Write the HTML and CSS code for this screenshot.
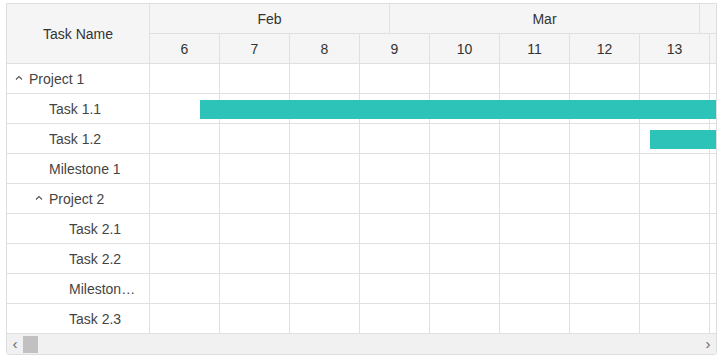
FILE: index.html
```html
<!DOCTYPE html>
<html>
<head>
<meta charset="utf-8">
<link rel="stylesheet" href="styles.css">
</head>
<body>
<div class="gantt">
  <div class="main">
    <div class="grid">
      <div class="grid-head">Task Name</div>
      <div class="row"><span class="tog lvl0"><svg width="8" height="6" viewBox="0 0 8 6"><polyline points="1,4.5 4,1.5 7,4.5" fill="none" stroke="#555" stroke-width="1.1"/></svg></span><span class="name">Project 1</span></div>
      <div class="row"><span class="tog lvl1"></span><span class="name">Task 1.1</span></div>
      <div class="row"><span class="tog lvl1"></span><span class="name">Task 1.2</span></div>
      <div class="row"><span class="tog lvl1"></span><span class="name">Milestone 1</span></div>
      <div class="row"><span class="tog lvl1"><svg width="8" height="6" viewBox="0 0 8 6"><polyline points="1,4.5 4,1.5 7,4.5" fill="none" stroke="#555" stroke-width="1.1"/></svg></span><span class="name">Project 2</span></div>
      <div class="row"><span class="tog lvl2"></span><span class="name">Task 2.1</span></div>
      <div class="row"><span class="tog lvl2"></span><span class="name">Task 2.2</span></div>
      <div class="row"><span class="tog lvl2"></span><span class="name">Milestone 2</span></div>
      <div class="row"><span class="tog lvl2"></span><span class="name">Task 2.3</span></div>
    </div>
    <div class="chart">
      <div class="months">
        <div class="month feb">Feb</div>
        <div class="month mar">Mar</div>
        <div class="month apr"></div>
      </div>
      <div class="days">
        <div class="day">6</div><div class="day">7</div><div class="day">8</div><div class="day">9</div><div class="day">10</div><div class="day">11</div><div class="day">12</div><div class="day">13</div><div class="day"></div>
      </div>
      <div class="rows">
        <div class="crow"><i></i><i></i><i></i><i></i><i></i><i></i><i></i><i></i><i></i></div>
        <div class="crow"><i></i><i></i><i></i><i></i><i></i><i></i><i></i><i></i><i></i><div class="bar bar1"></div></div>
        <div class="crow"><i></i><i></i><i></i><i></i><i></i><i></i><i></i><i></i><i></i><div class="bar bar2"></div></div>
        <div class="crow"><i></i><i></i><i></i><i></i><i></i><i></i><i></i><i></i><i></i></div>
        <div class="crow"><i></i><i></i><i></i><i></i><i></i><i></i><i></i><i></i><i></i></div>
        <div class="crow"><i></i><i></i><i></i><i></i><i></i><i></i><i></i><i></i><i></i></div>
        <div class="crow"><i></i><i></i><i></i><i></i><i></i><i></i><i></i><i></i><i></i></div>
        <div class="crow"><i></i><i></i><i></i><i></i><i></i><i></i><i></i><i></i><i></i></div>
        <div class="crow"><i></i><i></i><i></i><i></i><i></i><i></i><i></i><i></i><i></i></div>
      </div>
    </div>
  </div>
  <div class="hscroll">
    <span class="arrow">&lsaquo;</span>
    <span class="thumb"></span>
    <span class="track"></span>
    <span class="arrow">&rsaquo;</span>
  </div>
</div>
</body>
</html>
```
FILE: styles.css
```css
* { box-sizing: border-box; }
body {
  margin: 0;
  padding: 3px 0 0 6px;
  background: #fff;
  font-family: "Liberation Sans", Arial, sans-serif;
  font-size: 14px;
  color: #444;
}
.gantt {
  width: 711px;
  border: 1px solid #dedede;
  border-radius: 0 0 3px 3px;
  overflow: hidden;
}
.main {
  display: flex;
  height: 330px;
}
.grid {
  width: 143px;
  flex: none;
  border-right: 1px solid #e0e0e0;
}
.grid-head {
  height: 60px;
  background: #f5f5f5;
  border-bottom: 1px solid #e0e0e0;
  display: flex;
  align-items: center;
  justify-content: center;
  color: #333;
}
.row {
  height: 30px;
  border-bottom: 1px solid #e0e0e0;
  display: flex;
  align-items: center;
  padding-left: 2px;
  padding-right: 12px;
  white-space: nowrap;
}
.tog {
  flex: none;
  display: flex;
  justify-content: center;
  align-items: center;
  width: 20px;
  height: 20px;
  padding-bottom: 2px;
}
.lvl0 { margin-left: 0; }
.lvl1 { margin-left: 20px; }
.lvl2 { margin-left: 40px; }
.name {
  overflow: hidden;
  text-overflow: ellipsis;
  min-width: 0;
}
.chart {
  flex: 1;
  overflow: hidden;
  min-width: 0;
}
.months, .days {
  display: flex;
  height: 30px;
  background: #f5f5f5;
  border-bottom: 1px solid #e0e0e0;
  color: #333;
}
.month, .day {
  flex: none;
  border-right: 1px solid #e0e0e0;
  display: flex;
  align-items: center;
  justify-content: center;
}
.feb { width: 240px; }
.mar { width: 310px; }
.apr { width: 200px; }
.day { width: 70px; }
.crow {
  position: relative;
  display: flex;
  height: 30px;
  border-bottom: 1px solid #e0e0e0;
}
.crow i {
  flex: none;
  width: 70px;
  border-right: 1px solid #e0e0e0;
}
.bar {
  position: absolute;
  top: 6px;
  height: 19px;
  background: #2ec3b9;
}
.bar1 { left: 50px; width: 600px; }
.bar2 { left: 500px; width: 200px; }
.hscroll {
  display: flex;
  align-items: center;
  height: 20px;
  background: #f1f1f1;
}
.arrow {
  flex: none;
  width: 16px;
  text-align: center;
  color: #666;
  font-size: 15px;
  line-height: 18px;
}
.thumb {
  flex: none;
  width: 15px;
  height: 17px;
  background: #c1c1c1;
  margin-top: 1px;
}
.track { flex: 1; }
```
